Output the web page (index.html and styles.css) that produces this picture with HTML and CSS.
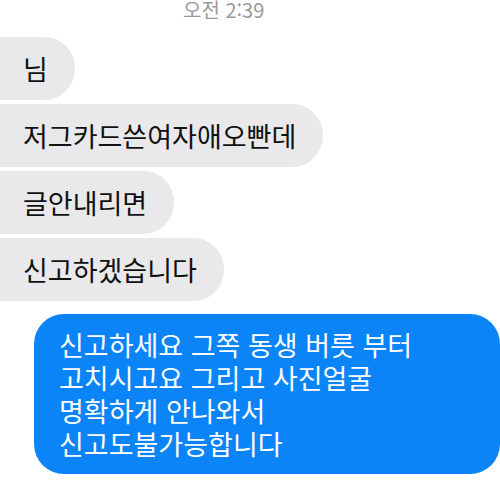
FILE: index.html
```html
<!DOCTYPE html>
<html lang="ko">
<head>
<meta charset="utf-8">
<link rel="stylesheet" href="styles.css">
</head>
<body>
<div class="chat">
  <div class="time">오전 2:39</div>
  <div class="msg in">님</div>
  <div class="msg in">저그카드쓴여자애오빤데</div>
  <div class="msg in">글안내리면</div>
  <div class="msg in">신고하겠습니다</div>
  <div class="msg out">신고하세요 그쪽 동생 버릇 부터<br>고치시고요 그리고 사진얼굴<br>명확하게 안나와서<br>신고도불가능합니다</div>
</div>
</body>
</html>
```
FILE: styles.css
```css
html, body {
  margin: 0;
  padding: 0;
  background: #ffffff;
}
.chat {
  width: 500px;
  height: 494px;
  overflow: hidden;
  display: flex;
  flex-direction: column;
  align-items: flex-start;
  gap: 4px;
  font-family: "Noto Sans CJK KR", "Noto Sans", sans-serif;
}
.time {
  align-self: stretch;
  padding-left: 183px;
  font-size: 20px;
  line-height: 20px;
  color: #9a9a9a;
  margin-bottom: 13px;
}
.msg {
  font-size: 27px;
  line-height: 33px;
  box-sizing: border-box;
}
.in {
  background: #e9e9eb;
  color: #111111;
  padding: 15px 27px 15px 23px;
  border-radius: 0 31px 31px 0;
}
.out {
  align-self: flex-end;
  margin-top: 9px;
  width: 466px;
  background: #0b84f7;
  color: #ffffff;
  padding: 14px 20px 14px 25px;
  border-radius: 30px;
}
```
